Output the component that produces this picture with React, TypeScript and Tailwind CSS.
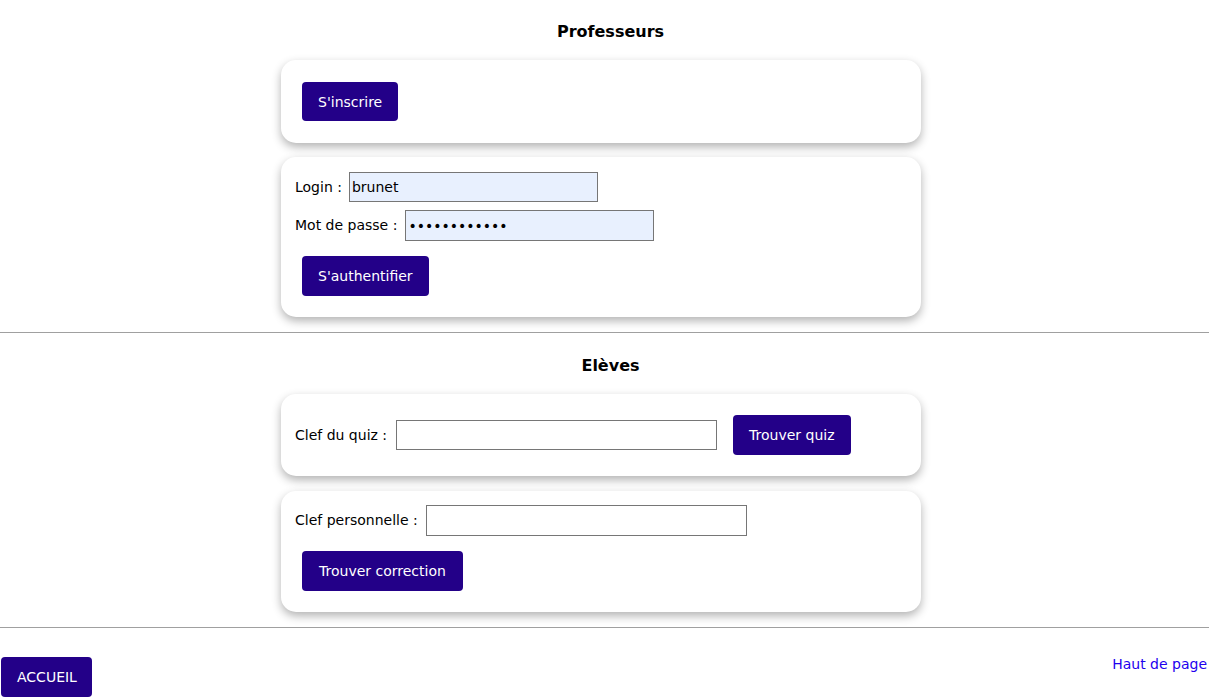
import React from "react";

const btn =
  "bg-[#230088] text-white rounded-[4px] px-[16px] h-[39px] text-[14px] leading-none";
const input =
  "border border-[#767676] h-[30px] px-[2px] text-[14px] outline-none";

export default function App() {
  return (
    <div className="min-h-[699px] bg-white text-black text-[14px] font-['DejaVu_Sans',Verdana,sans-serif]">
      <h2 className="pt-[21px] pl-[12px] text-center font-bold text-[16px] leading-[22px]">
        Professeurs
      </h2>
      <div className="flex flex-col items-center pr-[7px] pt-[17px] gap-[14px]">
        <div className="w-[640px] h-[83px] rounded-[15px] bg-white shadow-[0_4px_10px_rgba(0,0,0,0.3)] flex items-center px-[21px]">
          <button className={btn}>S'inscrire</button>
        </div>
        <div className="w-[640px] h-[160px] rounded-[15px] bg-white shadow-[0_4px_10px_rgba(0,0,0,0.3)] flex flex-col px-[14px] pt-[15px]">
          <div className="flex items-center">
            <span>Login :</span>
            <input
              className={input + " ml-[7px] w-[249px] bg-[#e8f0fe]"}
              defaultValue="brunet"
            />
          </div>
          <div className="flex items-center mt-[8px]">
            <span>Mot de passe :</span>
            <input
              type="password"
              className={input + " ml-[8px] h-[31px] w-[249px] bg-[#e8f0fe]"}
              defaultValue="aaaaaaaaaaaa"
            />
          </div>
          <div className="mt-[15px] pl-[7px]">
            <button className={btn + " h-[40px]"}>S'authentifier</button>
          </div>
        </div>
      </div>
      <hr className="mt-[15px] border-0 border-t border-[#a0a0a0]" />
      <h2 className="pt-[22px] pl-[12px] text-center font-bold text-[16px] leading-[22px]">
        Elèves
      </h2>
      <div className="flex flex-col items-center pr-[7px] pt-[17px] gap-[15px]">
        <div className="w-[640px] h-[82px] rounded-[15px] bg-white shadow-[0_4px_10px_rgba(0,0,0,0.3)] flex items-center px-[14px]">
          <span>Clef du quiz :</span>
          <input className={input + " ml-[9px] w-[321px] bg-white"} />
          <button className={btn + " ml-[16px] h-[40px]"}>Trouver quiz</button>
        </div>
        <div className="w-[640px] h-[121px] rounded-[15px] bg-white shadow-[0_4px_10px_rgba(0,0,0,0.3)] flex flex-col px-[14px] pt-[14px]">
          <div className="flex items-center">
            <span>Clef personnelle :</span>
            <input className={input + " ml-[8px] h-[31px] w-[321px] bg-white"} />
          </div>
          <div className="mt-[15px] pl-[7px]">
            <button className={btn + " px-[17px] h-[40px]"}>Trouver correction</button>
          </div>
        </div>
      </div>
      <hr className="mt-[15px] border-0 border-t border-[#a0a0a0]" />
      <div className="flex justify-between items-start pt-[29px] pl-[1px] pr-[2px]">
        <button className={btn + " h-[40px] w-[91px] px-0"}>ACCUEIL</button>
        <a href="#" className="text-[#2200ee] text-[14px] -mt-[3px]">
          Haut de page
        </a>
      </div>
    </div>
  );
}
